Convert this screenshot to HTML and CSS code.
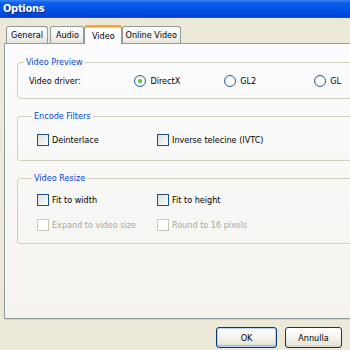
FILE: index.html
```html
<!DOCTYPE html>
<html>
<head>
<meta charset="utf-8">
<link rel="stylesheet" href="styles.css">
</head>
<body>
<div class="window">
  <div class="titlebar"><span class="title">Options</span></div>
  <div class="client">
    <div class="tabs">
      <div class="tab">General</div>
      <div class="tab tab-audio">Audio</div>
      <div class="tab active">Video</div>
      <div class="tab tab-online">Online Video</div>
    </div>
    <div class="panel">
      <fieldset class="group group-preview">
        <legend>Video Preview</legend>
        <div class="driver-row">
          <span class="driver-label">Video driver:</span>
          <span class="option"><span class="radio checked"></span>DirectX</span>
          <span class="option"><span class="radio"></span>GL2</span>
          <span class="option"><span class="radio"></span>GL</span>
        </div>
      </fieldset>
      <fieldset class="group group-filters">
        <legend>Encode Filters</legend>
        <div class="check-row">
          <span class="option"><span class="check"></span>Deinterlace</span>
          <span class="option"><span class="check"></span>Inverse telecine (IVTC)</span>
        </div>
      </fieldset>
      <fieldset class="group group-resize">
        <legend>Video Resize</legend>
        <div class="check-row">
          <span class="option"><span class="check"></span>Fit to width</span>
          <span class="option"><span class="check"></span>Fit to height</span>
        </div>
        <div class="check-row row-disabled">
          <span class="option disabled"><span class="check"></span>Expand to video size</span>
          <span class="option disabled"><span class="check"></span>Round to 16 pixels</span>
        </div>
      </fieldset>
    </div>
    <div class="buttons">
      <button class="btn btn-ok">OK</button>
      <button class="btn btn-cancel">Annulla</button>
    </div>
  </div>
</div>
</body>
</html>
```

FILE: styles.css
```css
html, body {
  margin: 0;
  padding: 0;
  width: 350px;
  height: 350px;
  overflow: hidden;
  background: #ece9d8;
}

.window {
  width: 350px;
  height: 350px;
  overflow: hidden;
  background: #ece9d8;
  font-family: "DejaVu Sans Condensed", "DejaVu Sans", "Liberation Sans", sans-serif;
  font-stretch: condensed;
  font-size: 9px;
  color: #000;
}

.titlebar {
  height: 17px;
  background: linear-gradient(#3c82f4 0px, #0b5fe9 3px, #0056e6 8px, #004cdf 13px, #0040cf 17px);
  border-bottom: 1px solid #1a4fc4;
  display: flex;
  align-items: center;
  padding-left: 3px;
}

.title {
  color: #fff;
  font-weight: bold;
  font-size: 11px;
  letter-spacing: -0.3px;
  line-height: 13px;
  text-shadow: 1px 1px 0 #0a2a88;
}

.client {
  padding-top: 6px;
  padding-left: 4px;
}

.tabs {
  display: flex;
  align-items: flex-end;
  padding-left: 2px;
  height: 19px;
  position: relative;
  z-index: 1;
}

.tab {
  height: 16px;
  line-height: 17px;
  padding: 0 4px;
  border: 1px solid #919b9c;
  border-bottom: none;
  border-radius: 3px 3px 0 0;
  background: linear-gradient(#ffffff, #f3f2ee 60%, #e6e4da);
  white-space: nowrap;
}

.tab-audio {
  margin-left: 2px;
  padding: 0 4px 0 5px;
}

.tab.active {
  height: 17px;
  line-height: 18px;
  margin-bottom: -1px;
  padding: 0 6px 0 7px;
  border-top: 2px solid #f5a623;
  box-shadow: inset 0 1px 0 #ffc83c;
  background: #fcfcfe;
  position: relative;
  z-index: 2;
}

.tab-online {
  padding: 0 3px 0 3px;
}

.panel {
  width: 400px;
  height: 261px;
  border: 1px solid #919b9c;
  background: linear-gradient(#fcfcfe, #f4f3ee);
  padding-top: 13px;
  box-sizing: content-box;
  box-shadow: 1px 1px 0 #d6d3c6;
}

.group {
  margin: 0 0 12px 12px;
  border: 1px solid #d0d0bf;
  border-radius: 3px;
  padding: 0 0 0 11px;
  min-width: 0;
}

.group legend {
  color: #0046d5;
  padding: 0 2px;
  margin-left: -5px;
  line-height: 11px;
}

.group-preview {
  padding-top: 7px;
  padding-bottom: 11px;
}

.group-filters {
  padding-top: 12px;
  padding-bottom: 14px;
  padding-left: 19px;
}

.group-resize {
  padding-top: 10px;
  padding-bottom: 12px;
  padding-left: 19px;
}

.driver-row {
  display: flex;
  align-items: center;
  height: 12px;
}

.driver-label {
  width: 108px;
}

.driver-row .option {
  width: 92px;
}

.option {
  display: flex;
  align-items: center;
  white-space: nowrap;
}

.check-row {
  display: grid;
  grid-template-columns: 120px 120px;
  align-items: center;
  height: 12px;
}

.row-disabled {
  margin-top: 13px;
}

.radio {
  width: 10px;
  height: 10px;
  border: 1px solid #2f5d8f;
  border-radius: 50%;
  background: radial-gradient(circle at 60% 60%, #ffffff 30%, #e6e4dc 100%);
  margin-right: 4px;
  position: relative;
  flex: none;
}

.radio.checked::after {
  content: "";
  position: absolute;
  left: 3px;
  top: 3px;
  width: 4px;
  height: 4px;
  border-radius: 50%;
  background: radial-gradient(circle at 40% 40%, #5fd45f, #21a121);
}

.check {
  width: 10px;
  height: 10px;
  border: 1px solid #1c5180;
  background: linear-gradient(135deg, #dcdcd7, #ffffff);
  margin-right: 3px;
  flex: none;
}

.option.disabled {
  color: #aca899;
}

.option.disabled .check {
  border-color: #cac8bb;
  background: #ffffff;
}

.buttons {
  display: flex;
  justify-content: flex-end;
  gap: 8px;
  padding-right: 8px;
  margin-top: 8px;
}

.btn {
  height: 21px;
  border: 1px solid #003c74;
  border-radius: 3px;
  background: linear-gradient(#ffffff, #f4f3ee 50%, #e8e5da 85%, #d6d0c5);
  font-family: "DejaVu Sans Condensed", "DejaVu Sans", "Liberation Sans", sans-serif;
  font-stretch: condensed;
  font-size: 9px;
  color: #000;
  padding: 0;
  margin: 0;
}

.btn-ok {
  width: 61px;
  box-shadow: inset 0 0 0 1px #bad3f8, inset 0 -1px 0 1px #98b8ea;
}

.btn-cancel {
  width: 57px;
}
```
